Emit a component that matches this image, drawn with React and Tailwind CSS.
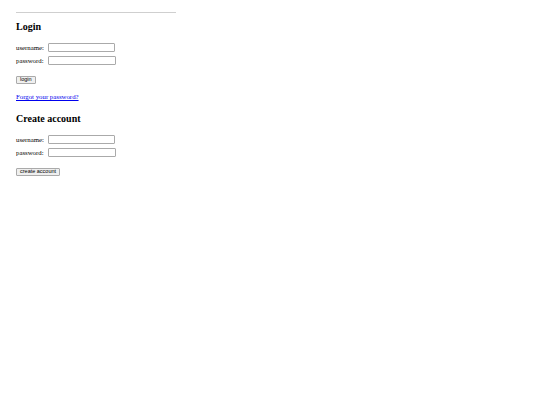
export default function App() {
  return (
    <div className="min-h-screen bg-white text-black px-4 pt-3" style={{ fontFamily: '"Liberation Serif", serif' }}>
      <div className="w-[160px] border-t border-[#cfcfcf]" />
      <h2 className="mt-[8px] text-[10px] font-bold leading-[12px]">Login</h2>
      <form className="mt-[10px] flex flex-col gap-[4px] text-[6.8px] leading-[9px]">
        <div className="flex items-center gap-[4px] h-[9px]">
          <span>username:</span>
          <input className="w-[67px] h-[9px] border border-[#aaa] rounded-[1px]" />
        </div>
        <div className="flex items-center gap-[4px] h-[9px]">
          <span>password:</span>
          <input type="password" className="w-[68px] h-[9px] border border-[#aaa] rounded-[1px]" />
        </div>
        <div className="mt-[7px] flex">
          <button type="button" className="h-[8px] px-[3px] border border-[#aaa] bg-[#efefef] rounded-[1px] text-[5.5px] leading-none" style={{ fontFamily: '"Liberation Sans", sans-serif' }}>login</button>
        </div>
      </form>
      <a href="#" className="block mt-[8px] text-[6.8px] leading-[9px] text-[#0000ee] underline">Forgot your password?</a>
      <h2 className="mt-[12px] text-[10px] font-bold leading-[12px]">Create account</h2>
      <form className="mt-[10px] flex flex-col gap-[4px] text-[6.8px] leading-[9px]">
        <div className="flex items-center gap-[4px] h-[9px]">
          <span>username:</span>
          <input className="w-[67px] h-[9px] border border-[#aaa] rounded-[1px]" />
        </div>
        <div className="flex items-center gap-[4px] h-[9px]">
          <span>password:</span>
          <input type="password" className="w-[68px] h-[9px] border border-[#aaa] rounded-[1px]" />
        </div>
        <div className="mt-[7px] flex">
          <button type="button" className="h-[8px] px-[3px] border border-[#aaa] bg-[#efefef] rounded-[1px] text-[5.5px] leading-none" style={{ fontFamily: '"Liberation Sans", sans-serif' }}>create account</button>
        </div>
      </form>
    </div>
  );
}
